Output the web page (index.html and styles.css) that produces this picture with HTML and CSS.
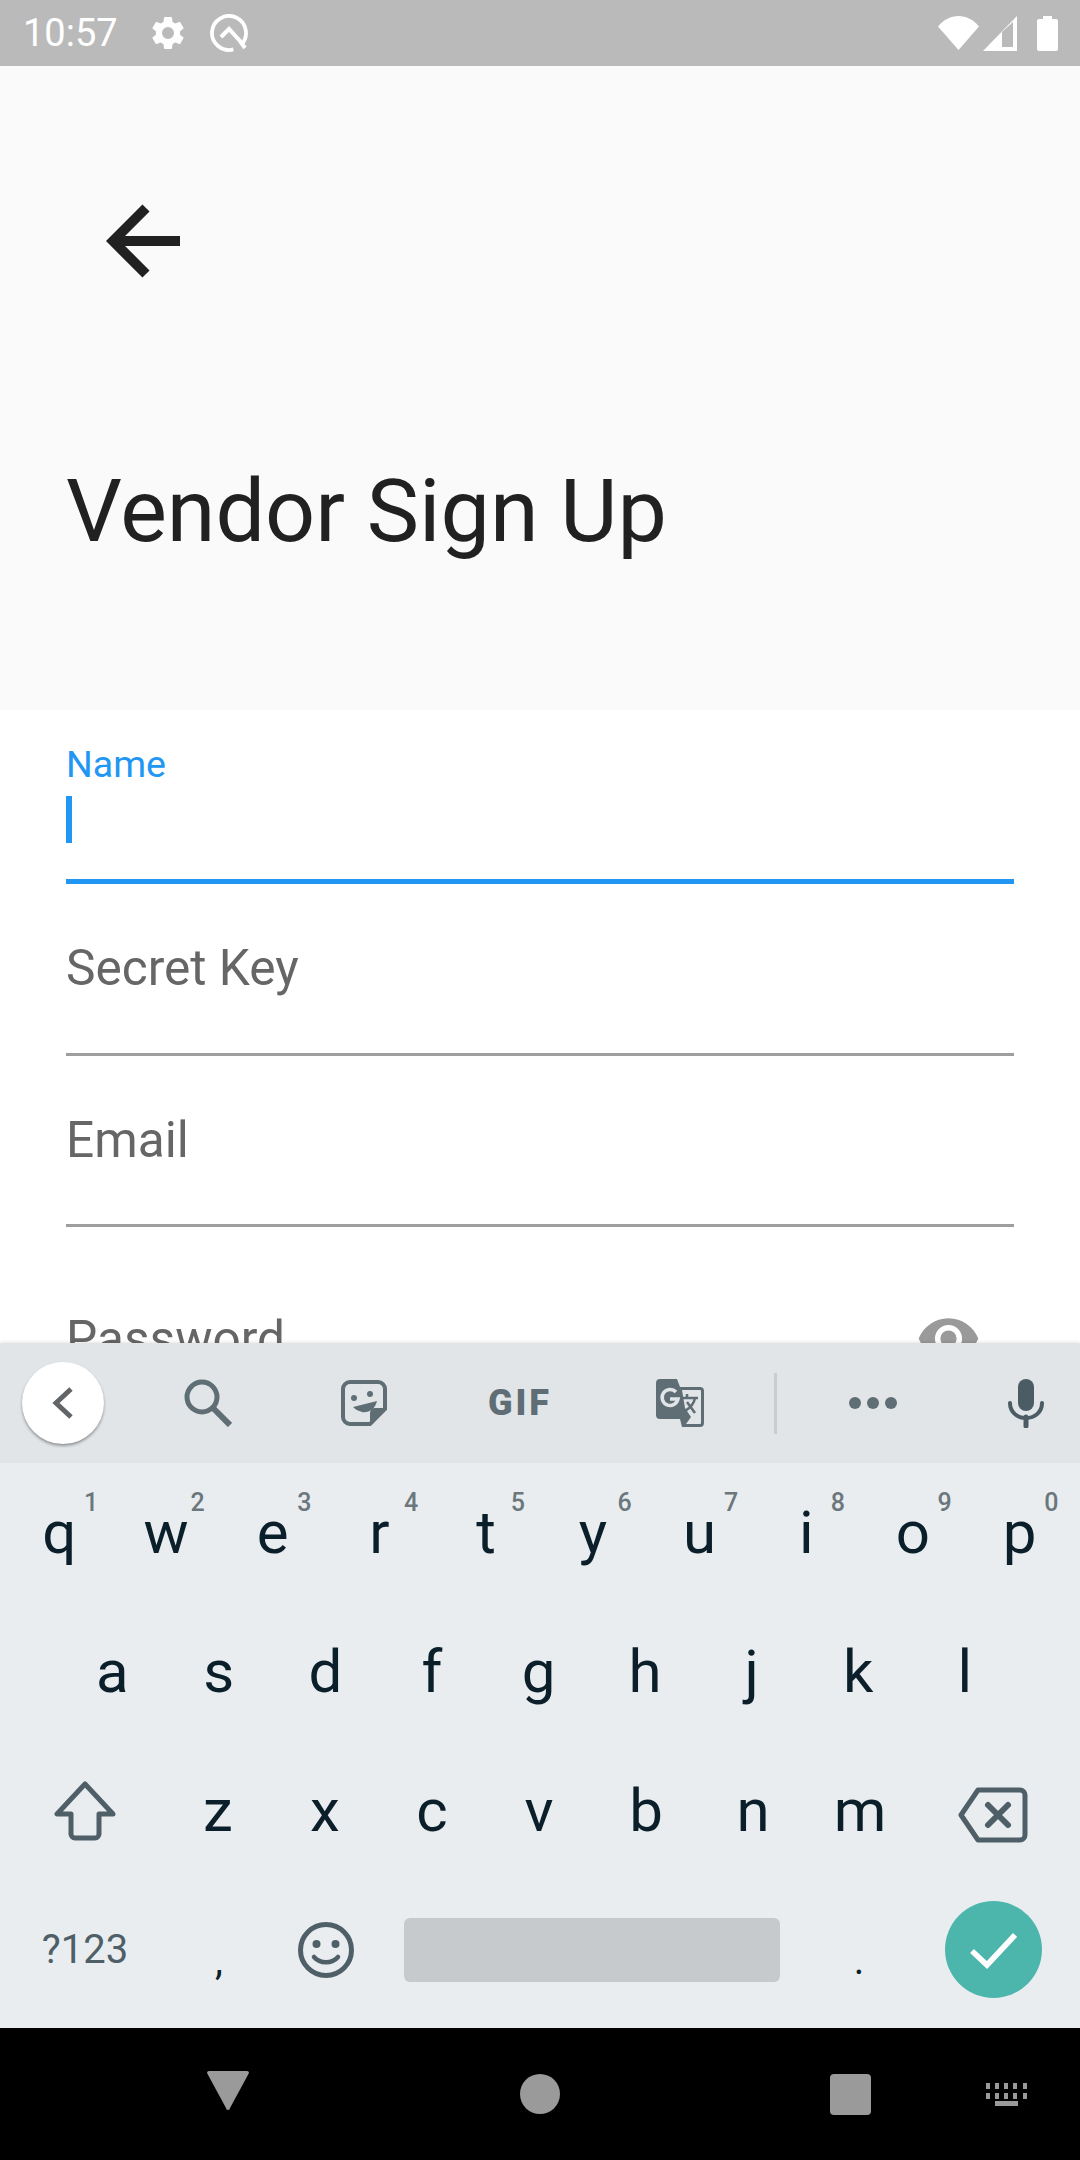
FILE: index.html
```html
<!DOCTYPE html>
<html lang="en">
<head>
    <meta charset="UTF-8">
    <meta name="viewport" content="width=device-width, initial-scale=1.0">
    <title>Vendor Sign Up</title>
    <link rel="stylesheet" href="styles.css">
</head>
<body>

<div class="phone">
    <div class="status-bar">
        <span class="time">10:57</span>
        <svg class="gear" viewBox="0 0 24 24"><path d="M19.14 12.94c.04-.3.06-.61.06-.94s-.02-.64-.07-.94l2.03-1.58a.5.5 0 0 0 .12-.61l-1.92-3.32a.5.5 0 0 0-.59-.22l-2.39.96a7 7 0 0 0-1.62-.94l-.36-2.54a.48.48 0 0 0-.48-.41h-3.84a.48.48 0 0 0-.47.41l-.36 2.54c-.59.24-1.13.57-1.62.94l-2.39-.96a.49.49 0 0 0-.59.22L2.74 8.87a.48.48 0 0 0 .12.61l2.03 1.58c-.05.3-.09.63-.09.94s.02.64.07.94l-2.03 1.58a.5.5 0 0 0-.12.61l1.92 3.32c.12.22.37.29.59.22l2.39-.96c.5.38 1.03.7 1.62.94l.36 2.54c.05.24.24.41.48.41h3.84c.24 0 .44-.17.47-.41l.36-2.54c.59-.24 1.13-.56 1.62-.94l2.39.96c.22.08.47 0 .59-.22l1.92-3.32a.48.48 0 0 0-.12-.61zM12 15.6A3.6 3.6 0 1 1 12 8.4a3.6 3.6 0 0 1 0 7.2z"/></svg>
        <svg class="q-logo" viewBox="0 0 38 38"><path d="M23.400 35.400A17 17 0 1 1 31 31" fill="none" stroke="#fff" stroke-width="3.800"/><path d="M11 23l8-8 11 12 5 7" fill="none" stroke="#fff" stroke-width="4"/></svg>
        <span class="spacer"></span>
        <svg class="wifi" viewBox="0 0 41 34"><path d="M0 10.500C11-3.500 30-3.500 41 10.500L20.500 34z" fill="#fff"/></svg>
        <svg class="signal" viewBox="0 0 34 35"><path d="M0 35L34 0V35z" fill="#fff"/><path d="M19 31V16L30 6V31z" fill="#bababa"/></svg>
        <svg class="battery" viewBox="0 0 21 35"><path d="M6 0h9v3h4a2 2 0 0 1 2 2v28a2 2 0 0 1-2 2H2a2 2 0 0 1-2-2V5a2 2 0 0 1 2-2h4z" fill="#fff"/></svg>
    </div>

    <div class="content">
        <header class="header">
            <svg class="back-arrow" viewBox="0 0 74 74"><path d="M74 37H8" fill="none" stroke="#212121" stroke-width="10"/><path d="M40 4L7 37l33 33" fill="none" stroke="#212121" stroke-width="10"/></svg>
            <h1 class="title">Vendor Sign Up</h1>
        </header>

        <form class="form">
            <div class="field focused">
                <div class="float-label">Name</div>
                <div class="caret"></div>
            </div>
            <div class="field">
                <div class="hint">Secret Key</div>
            </div>
            <div class="field">
                <div class="hint">Email</div>
            </div>
            <div class="field with-eye">
                <div class="hint">Password</div>
                <svg class="eye" viewBox="0 0 24 24"><path d="M12 4.500C7 4.500 2.730 7.610 1 12c1.730 4.390 6 7.500 11 7.500s9.270-3.110 11-7.500c-1.730-4.390-6-7.500-11-7.500zM12 17a5 5 0 1 1 0-10 5 5 0 0 1 0 10zm0-8a3 3 0 1 0 0 6 3 3 0 0 0 0-6z"/></svg>
            </div>
        </form>
    </div>

    <div class="keyboard">
        <div class="toolbar">
            <div class="tool"><div class="collapse"><svg width="24" height="34" viewBox="0 0 24 34"><path d="M20 3L5 17l15 14" fill="none" stroke="#616568" stroke-width="5"/></svg></div></div>
            <div class="tool"><svg width="48" height="48" viewBox="0 0 48 48"><circle cx="18" cy="18" r="15" fill="none" stroke="#5f6e75" stroke-width="5"/><path d="M29 29l17 17" stroke="#5f6e75" stroke-width="6"/></svg></div>
            <div class="tool"><svg width="46" height="46" viewBox="0 0 46 46"><path d="M9 2h28a7 7 0 0 1 7 7v20L29 44H9a7 7 0 0 1-7-7V9a7 7 0 0 1 7-7z" fill="none" stroke="#5f6e75" stroke-width="4"/><path d="M44 28L29 44V33a5 5 0 0 1 5-5z" fill="#5f6e75"/><circle cx="13" cy="18" r="3" fill="#5f6e75"/><circle cx="29" cy="14" r="3" fill="#5f6e75"/><path d="M12 27l24-6c-2 9-9 12-15 11-4-1-7-3-9-5z" fill="#5f6e75"/></svg></div>
            <div class="tool"><span class="gif">GIF</span></div>
            <div class="tool"><svg width="48" height="48" viewBox="0 0 48 48"><path d="M4 0h17l3 8h20a4 4 0 0 1 4 4v32a4 4 0 0 1-4 4H26l-2-8H4a4 4 0 0 1-4-4V4a4 4 0 0 1 4-4z" fill="#5f6e75"/><path d="M26 11h18a1 1 0 0 1 1 1v32a1 1 0 0 1-1 1H30l5-7-6-9-3-18z" fill="#e1e5e8"/><path d="M20 13a8 8 0 1 0 2 7h-8" fill="none" stroke="#e1e5e8" stroke-width="3.500"/><path d="M27 19h15M31 15v4M39 19c-1 6-5 10-10 13M31 23l8 11" fill="none" stroke="#5f6e75" stroke-width="2.500"/></svg></div>
            <div class="tool"><div class="divider"></div></div>
            <div class="tool"><div class="dots"><i></i><i></i><i></i></div></div>
            <div class="tool tool-mic"><svg width="36" height="49" viewBox="0 0 36 49"><rect x="10" y="0" width="16" height="32" rx="8" fill="#4c5c64"/><path d="M2 24c0 9 7 15 16 15s16-6 16-15" fill="none" stroke="#4c5c64" stroke-width="4" stroke-linecap="round"/><path d="M18 38v9" stroke="#4c5c64" stroke-width="5" stroke-linecap="round"/></svg></div>
        </div>

        <div class="keys row-full">
            <div class="key">q<sup>1</sup></div>
            <div class="key">w<sup>2</sup></div>
            <div class="key">e<sup>3</sup></div>
            <div class="key">r<sup>4</sup></div>
            <div class="key">t<sup>5</sup></div>
            <div class="key">y<sup>6</sup></div>
            <div class="key">u<sup>7</sup></div>
            <div class="key">i<sup>8</sup></div>
            <div class="key">o<sup>9</sup></div>
            <div class="key">p<sup>0</sup></div>
        </div>
        <div class="keys row-home">
            <div class="key">a</div>
            <div class="key">s</div>
            <div class="key">d</div>
            <div class="key">f</div>
            <div class="key">g</div>
            <div class="key">h</div>
            <div class="key">j</div>
            <div class="key">k</div>
            <div class="key">l</div>
        </div>
        <div class="keys row-shift">
            <div class="key"><svg width="62" height="60" viewBox="0 0 62 60"><path d="M31 3L3 33h14v20a4 4 0 0 0 4 4h20a4 4 0 0 0 4-4V33h14z" fill="none" stroke="#4f5f67" stroke-width="5" stroke-linejoin="round"/></svg></div>
            <div class="key">z</div>
            <div class="key">x</div>
            <div class="key">c</div>
            <div class="key">v</div>
            <div class="key">b</div>
            <div class="key">n</div>
            <div class="key">m</div>
            <div class="key key-delete"><svg width="70" height="56" viewBox="0 0 70 56"><path d="M20 3h42a5 5 0 0 1 5 5v40a5 5 0 0 1-5 5H20L3 28z" fill="none" stroke="#4f5f67" stroke-width="5" stroke-linejoin="round"/><path d="M30 18l20 20M50 18L30 38" stroke="#4f5f67" stroke-width="6" stroke-linecap="round"/></svg></div>
        </div>
        <div class="keys row-bottom">
            <div class="key symbols">?123</div>
            <div class="key punct">,</div>
            <div class="key"><svg width="56" height="56" viewBox="0 0 56 56"><circle cx="28" cy="28" r="25.500" fill="none" stroke="#4f5f67" stroke-width="5"/><circle cx="18.500" cy="22" r="4" fill="#4f5f67"/><circle cx="37.500" cy="22" r="4" fill="#4f5f67"/><path d="M16 35c6 7 18 7 24 0" fill="none" stroke="#4f5f67" stroke-width="4.500" stroke-linecap="round"/></svg></div>
            <div class="key"><div class="space-bar"></div></div>
            <div class="key punct">.</div>
            <div class="key"><div class="enter"><svg width="48" height="38" viewBox="0 0 48 38"><path d="M3 20l15 14L46 4" fill="none" stroke="#fff" stroke-width="5.500"/></svg></div></div>
        </div>
    </div>

    <div class="nav-bar">
        <svg class="nav-back" width="44" height="40" viewBox="0 0 44 40"><path d="M3 1h38a2 2 0 0 1 2 2L24 38a2 2 0 0 1-4 0L1 3a2 2 0 0 1 2-2z" fill="#9a9a9a"/></svg>
        <div class="nav-circle"></div>
        <div class="nav-square"></div>
        <svg class="nav-keyboard" width="42" height="23" viewBox="0 0 42 23" fill="#9a9a9a"><path d="M0 0h4v6H0zM9 0h4v6H9zM18 0h4v6h-4zM27 0h4v6h-4zM37 0h4v6h-4zM0 10h4v6H0zM9 10h4v6H9zM18 10h4v6h-4zM27 10h4v6h-4zM37 10h4v6h-4zM9 18h23v5H9z"/></svg>
    </div>
</div>

</body>
</html>
```
FILE: styles.css
```css
body {
    margin: 0;
    background-color: #000;
    font-family: Roboto, sans-serif;
}
.phone {
    width: 1080px;
    height: 2160px;
    display: flex;
    flex-direction: column;
    overflow: hidden;
}
.status-bar {
    height: 66px;
    flex: none;
    display: flex;
    align-items: center;
    padding: 0 22px 0 23px;
    box-sizing: border-box;
    background-color: #bababa;
    color: #fff;
}
.time {
    font-size: 38px;
    width: 125px;
}
.gear {
    width: 40px;
    height: 40px;
    fill: #fff;
}
.q-logo {
    width: 38px;
    height: 38px;
    margin-left: 22px;
}
.spacer {
    flex: 1;
}
.wifi {
    width: 41px;
    height: 34px;
}
.signal {
    width: 34px;
    height: 35px;
    margin-left: 4px;
}
.battery {
    width: 21px;
    height: 35px;
    margin-left: 20px;
}
.content {
    flex: 1;
    min-height: 0;
    overflow: hidden;
    background-color: #fff;
}
.header {
    height: 644px;
    box-sizing: border-box;
    padding: 138px 0 0 66px;
    background-color: #fafafa;
}
.back-arrow {
    display: block;
    width: 74px;
    height: 74px;
    margin-left: 40px;
}
.title {
    margin: 185px 0 0;
    font-size: 88px;
    font-weight: 400;
    line-height: 95px;
    color: #212121;
}
.form {
    padding: 3px 66px 0;
}
.field {
    position: relative;
    height: 171.5px;
    box-sizing: border-box;
    border-bottom: 3px solid #9e9e9e;
}
.field.focused {
    height: 171px;
    border-bottom: 5px solid #2196f3;
    padding-top: 29px;
}
.float-label {
    font-size: 37.5px;
    line-height: 44px;
    color: #2196f3;
}
.caret {
    width: 6px;
    height: 47px;
    margin-top: 10px;
    background-color: #2196f3;
}
.hint {
    padding-top: 55px;
    font-size: 49.6px;
    line-height: 58px;
    color: #666;
}
.with-eye {
    border-bottom: none;
}
.with-eye .hint {
    padding-top: 83px;
}
.eye {
    position: absolute;
    right: 33px;
    top: 79px;
    width: 65px;
    height: 65px;
    fill: #9a9a9a;
}
.keyboard {
    flex: none;
    height: 685px;
    background-color: #e9edf0;
    position: relative;
    box-shadow: 0 -1px 3px rgba(0, 0, 0, 0.1);
}
.toolbar {
    height: 120px;
    display: grid;
    grid-template-columns: 126px 164px 148px 164px 156px 34px 162px 126px;
    background-color: #e1e5e8;
}
.tool {
    display: flex;
    justify-content: center;
    align-items: center;
}
.tool-mic {
    padding-left: 18px;
}
.collapse {
    width: 82px;
    height: 82px;
    border-radius: 50%;
    background-color: #fff;
    box-shadow: 0 2px 3px rgba(0, 0, 0, 0.35);
    display: flex;
    justify-content: center;
    align-items: center;
}
.gif {
    font-size: 36px;
    font-weight: 900;
    letter-spacing: 3px;
    color: #5f6e75;
}
.divider {
    width: 3px;
    height: 61px;
    background-color: #c9cdd0;
}
.dots {
    display: flex;
    gap: 6px;
}
.dots i {
    width: 12px;
    height: 12px;
    border-radius: 50%;
    background-color: #5f6e75;
}
.keys {
    height: 139px;
    display: grid;
    box-sizing: border-box;
}
.row-full {
    grid-template-columns: repeat(10, 1fr);
    padding: 0 7px 0 6px;
}
.row-home {
    grid-template-columns: repeat(9, 1fr);
    padding: 0 62px 0 59px;
}
.row-shift {
    grid-template-columns: 158.5px repeat(7, 107px) 159px;
    padding: 0 5px 0 6px;
}
.row-bottom {
    grid-template-columns: 158px 110px 104px 428px 106px 1fr;
    padding: 0 6px;
}
.key {
    position: relative;
    display: flex;
    justify-content: center;
    align-items: center;
    font-size: 60px;
    color: #0b1f2a;
}
.key sup {
    position: absolute;
    left: 73%;
    top: 25px;
    font-size: 25px;
    line-height: 30px;
    font-weight: 500;
    color: #6b777c;
}
.key-delete {
    padding-top: 9px;
}
.symbols {
    font-size: 40px;
    color: #4f5f67;
}
.punct {
    font-size: 40px;
    padding-top: 22px;
}
.space-bar {
    width: 376px;
    height: 64px;
    border-radius: 6px;
    background-color: #c6cacd;
}
.enter {
    width: 97px;
    height: 97px;
    border-radius: 50%;
    background-color: #4db6ac;
    display: flex;
    justify-content: center;
    align-items: center;
}
.nav-bar {
    height: 132px;
    flex: none;
    box-sizing: border-box;
    padding-left: 206px;
    display: flex;
    align-items: center;
    background-color: #000;
}
.nav-back {
    margin-bottom: 8px;
}
.nav-circle {
    width: 40px;
    height: 40px;
    margin-left: 270px;
    border-radius: 50%;
    background-color: #9a9a9a;
}
.nav-square {
    width: 41px;
    height: 41px;
    margin-left: 270px;
    border-radius: 4px;
    background-color: #9a9a9a;
}
.nav-keyboard {
    margin-left: 115px;
}
```
